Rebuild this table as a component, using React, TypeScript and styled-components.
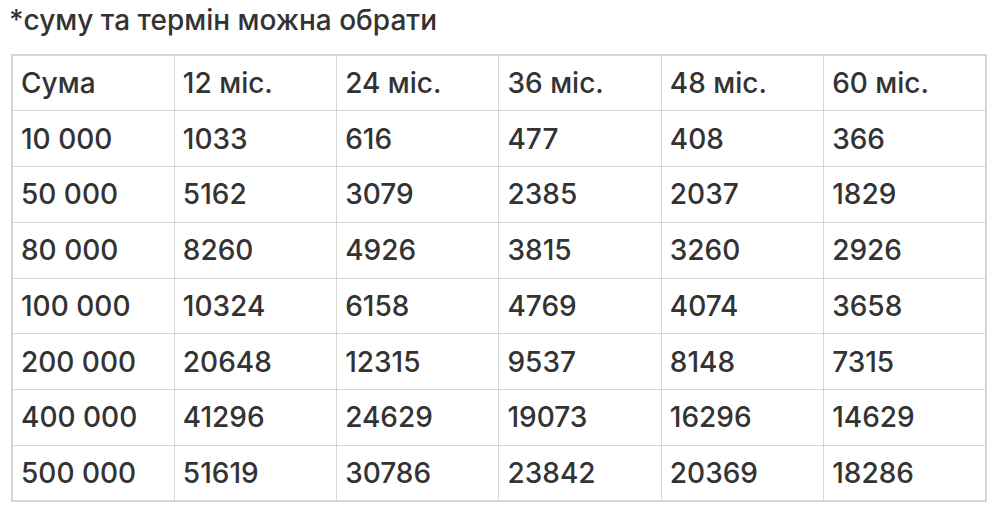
import React from "react";
import styled, { createGlobalStyle } from "styled-components";

const Global = createGlobalStyle`
  html, body { margin: 0; padding: 0; background: #fff; }
  body { font-family: Inter, "Liberation Sans", "Noto Sans", sans-serif; color: #333; }
`;

const Page = styled.div`
  width: 1000px;
  height: 523px;
  padding: 0 0 0 11px;
  box-sizing: border-box;
  background: #fff;
`;

const Title = styled.div`
  font-size: 28px;
  line-height: 40px;
  height: 38px;
  margin-left: -2px;
  color: #333;
  font-weight: 500;
`;

const Table = styled.table`
  margin-top: 16px;
  border-collapse: collapse;
  width: 976px;
  table-layout: fixed;
  border: 2px solid #d6d6d6;
`;

const Cell = styled.td`
  border: 1px solid #d6d6d6;
  height: 55.75px;
  padding: 0 0 0 8px;
  font-size: 28px;
  font-weight: 500;
  color: #333;
  vertical-align: middle;
  box-sizing: border-box;
  white-space: nowrap;
`;

const header = ["Сума", "12 міс.", "24 міс.", "36 міс.", "48 міс.", "60 міс."];
const rows = [
  ["10 000", "1033", "616", "477", "408", "366"],
  ["50 000", "5162", "3079", "2385", "2037", "1829"],
  ["80 000", "8260", "4926", "3815", "3260", "2926"],
  ["100 000", "10324", "6158", "4769", "4074", "3658"],
  ["200 000", "20648", "12315", "9537", "8148", "7315"],
  ["400 000", "41296", "24629", "19073", "16296", "14629"],
  ["500 000", "51619", "30786", "23842", "20369", "18286"],
];

export default function App() {
  return (
    <Page>
      <Global />
      <Title>*суму та термін можна обрати</Title>
      <Table>
        <tbody>
          <tr>
            {header.map((h) => (
              <Cell key={h}>{h}</Cell>
            ))}
          </tr>
          {rows.map((r) => (
            <tr key={r[0]}>
              {r.map((c, i) => (
                <Cell key={i}>{c}</Cell>
              ))}
            </tr>
          ))}
        </tbody>
      </Table>
    </Page>
  );
}
